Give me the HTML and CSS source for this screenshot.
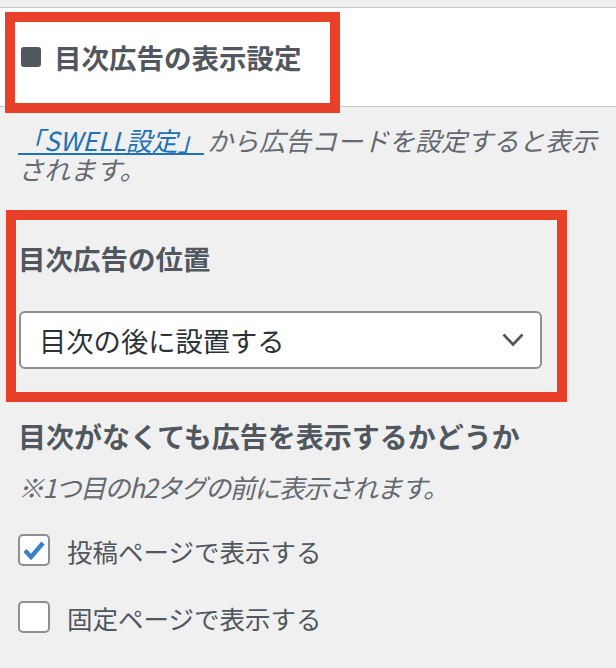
FILE: index.html
```html
<!DOCTYPE html>
<html lang="ja">
<head>
    <meta charset="UTF-8">
    <meta name="viewport" content="width=device-width, initial-scale=1.0">
    <title>目次広告の表示設定</title>
    <link rel="stylesheet" href="styles.css">
</head>
<body>
    <div class="panel-head">
        <h2 class="panel-title"><span class="bullet"></span>目次広告の表示設定</h2>
    </div>
    <div class="panel-body">
        <p class="desc"><a href="javascript:;">「SWELL設定」</a><span>から広告コードを設定すると表示</span><br><span>されます。</span></p>

        <div class="field">
            <h3 class="field-label">目次広告の位置</h3>
            <div class="select">
                <span>目次の後に設置する</span>
                <svg class="chevron" width="22" height="14" viewBox="0 0 22 14">
                    <polyline points="1.5,1.5 11,11.5 20.5,1.5" fill="none" stroke="#50575e" stroke-width="2.6"/>
                </svg>
            </div>
        </div>

        <div class="field field-check">
            <h3 class="field-label field-label-wide">目次がなくても広告を表示するかどうか</h3>
            <p class="note">※1つ目のh2タグの前に表示されます。</p>
            <label class="check">
                <span class="box">
                    <svg width="28" height="28" viewBox="0 0 28 28">
                        <polyline points="5,14.5 11,21 23,7" fill="none" stroke="#3582c4" stroke-width="4.4" stroke-linejoin="miter"/>
                    </svg>
                </span>
                投稿ページで表示する
            </label>
            <label class="check check-2">
                <span class="box"></span>
                固定ページで表示する
            </label>
        </div>
    </div>

    <!-- 注釈の赤枠 -->
    <div class="mark mark-1"></div>
    <div class="mark mark-2"></div>
</body>
</html>
```

FILE: styles.css
```css
* {
    padding: 0;
    margin: 0;
    box-sizing: border-box;
}
body {
    position: relative;
    width: 616px;
    height: 668px;
    overflow: hidden;
    padding-top: 7px;
    background-color: #f0f0f1;
    font-family: "Noto Sans CJK JP", "Noto Sans", sans-serif;
    color: #50575e;
}
a {
    color: #2271b1;
}
.panel-head {
    height: 100px;
    background-color: #fff;
    border-top: 1px solid #c6c7ca;
    border-bottom: 1px solid #c6c7ca;
    display: flex;
    align-items: center;
    padding-left: 21px;
}
.panel-title {
    display: flex;
    align-items: center;
    font-size: 27.5px;
    line-height: 36px;
    font-weight: bold;
    color: #50575e;
}
.panel-title .bullet {
    width: 20px;
    height: 20px;
    border-radius: 3px;
    background-color: #50575e;
    margin-right: 13px;
}
.panel-body {
    padding: 18px 10px 0 18px;
}
.desc {
    font-size: 26px;
    line-height: 29px;
    font-style: italic;
    color: #646970;
}
.desc a {
    margin-right: 3px;
}
.field-label {
    font-size: 27.5px;
    line-height: 36px;
    font-weight: bold;
    color: #50575e;
}
.field-label-wide {
    font-size: 28px;
}
.field {
    margin-top: 57px;
}
.field-check {
    margin-top: 49px;
}
.select {
    margin-top: 35px;
    width: 523px;
    height: 58px;
    margin-left: 1px;
    background-color: #fff;
    border: 2px solid #8c8f94;
    border-radius: 6px;
    display: flex;
    align-items: center;
    justify-content: space-between;
    padding: 0 16px 0 18px;
    font-size: 27.3px;
    color: #2c3338;
}
.note {
    margin-top: 18px;
    font-size: 26px;
    line-height: 29px;
    letter-spacing: -1.5px;
    font-style: italic;
    color: #646970;
}
.check {
    display: flex;
    align-items: center;
    gap: 17px;
    margin-top: 33px;
    height: 32px;
    font-size: 25.5px;
    color: #50575e;
}
.check-2 {
    margin-top: 35px;
}
.check .box {
    width: 32px;
    height: 32px;
    flex-shrink: 0;
    background-color: #fff;
    border: 2px solid #8c8f94;
    border-radius: 5px;
    display: flex;
    align-items: center;
    justify-content: center;
}
.mark {
    position: absolute;
    border: 10px solid #e9402a;
}
.mark-1 {
    left: 5px;
    top: 12px;
    width: 335px;
    height: 101px;
}
.mark-2 {
    left: 6px;
    top: 210px;
    width: 561px;
    height: 192px;
}
```
